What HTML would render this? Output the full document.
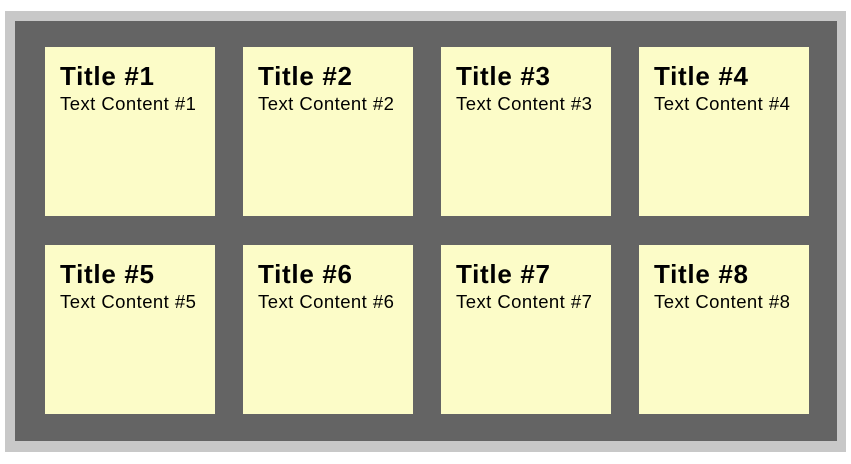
<!DOCTYPE html>
<html><head><style>
body{margin:0;width:851px;height:464px;background:#fff;position:relative;overflow:hidden;font-family:"Liberation Sans",Arial,sans-serif}
.o{position:absolute;left:5px;top:11px;width:841px;height:441px;background:#c8c8c8}
.d{position:absolute;left:15px;top:21px;width:822px;height:420px;background:#646464}
.c{position:absolute;width:170px;height:169px;background:#fcfcc8}
.c b{position:absolute;left:15px;top:14px;font-size:26px;line-height:30px;color:#000;letter-spacing:0.7px}
.c span{position:absolute;left:15px;top:46px;font-size:18.5px;line-height:22px;color:#000;letter-spacing:0.45px}
</style></head><body>
<div class="o"></div><div class="d"></div>
<div class="c" style="left:45px;top:47px"><b>Title #1</b><span>Text Content #1</span></div>
<div class="c" style="left:243px;top:47px"><b>Title #2</b><span>Text Content #2</span></div>
<div class="c" style="left:441px;top:47px"><b>Title #3</b><span>Text Content #3</span></div>
<div class="c" style="left:639px;top:47px"><b>Title #4</b><span>Text Content #4</span></div>
<div class="c" style="left:45px;top:245px"><b>Title #5</b><span>Text Content #5</span></div>
<div class="c" style="left:243px;top:245px"><b>Title #6</b><span>Text Content #6</span></div>
<div class="c" style="left:441px;top:245px"><b>Title #7</b><span>Text Content #7</span></div>
<div class="c" style="left:639px;top:245px"><b>Title #8</b><span>Text Content #8</span></div>
</body></html>
